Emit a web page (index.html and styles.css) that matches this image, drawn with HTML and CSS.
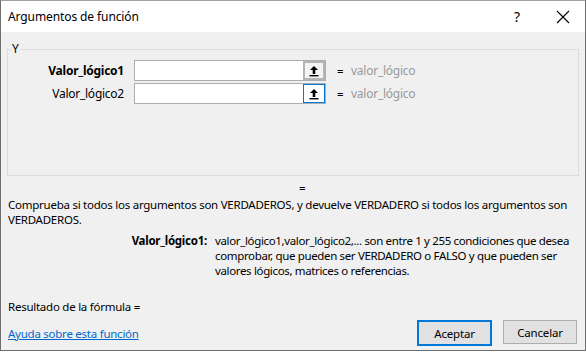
FILE: index.html
```html
<!DOCTYPE html>
<html>
<head>
  <title>Argumentos de función</title>
  <link rel="stylesheet" href="styles.css">
</head>
<body>
  <div class="dialog">
    <div class="titlebar">
      <span class="title">Argumentos de función</span>
      <span class="help">?</span>
      <span class="close">
        <svg width="14" height="14" viewBox="0 0 14 14"><path d="M1 1 L13 13 M13 1 L1 13" stroke="#000" stroke-width="1.1" fill="none"/></svg>
      </span>
    </div>

    <div class="content">
      <fieldset class="group">
        <legend>Y</legend>
        <div class="arg-row">
          <label class="arg-label bold">Valor_lógico1</label>
          <div class="arg-input">
            <span class="arg-field"></span>
            <button class="ref-btn">
              <svg width="10" height="12" viewBox="0 0 10 12"><path d="M5 1 L9 5 L6.3 5 L6.3 9 L3.7 9 L3.7 5 L1 5 Z" fill="#000"/><rect x="0.5" y="10" width="9" height="1.4" fill="#000"/></svg>
            </button>
          </div>
          <span class="eq">=</span>
          <span class="arg-value">valor_lógico</span>
        </div>
        <div class="arg-row">
          <label class="arg-label">Valor_lógico2</label>
          <div class="arg-input">
            <span class="arg-field"></span>
            <button class="ref-btn focus">
              <svg width="10" height="12" viewBox="0 0 10 12"><path d="M5 1 L9 5 L6.3 5 L6.3 9 L3.7 9 L3.7 5 L1 5 Z" fill="#000"/><rect x="0.5" y="10" width="9" height="1.4" fill="#000"/></svg>
            </button>
          </div>
          <span class="eq">=</span>
          <span class="arg-value">valor_lógico</span>
        </div>
      </fieldset>

      <div class="result-eq">=</div>
      <p class="desc">Comprueba si todos los argumentos son VERDADEROS, y devuelve VERDADERO si todos los argumentos son VERDADEROS.</p>

      <div class="arg-help">
        <span class="help-label">Valor_lógico1:</span>
        <span class="help-text">valor_lógico1,valor_lógico2,... son entre 1 y 255 condiciones que desea comprobar, que pueden ser VERDADERO o FALSO y que pueden ser valores lógicos, matrices o referencias.</span>
      </div>

      <div class="formula">Resultado de la fórmula =</div>

      <div class="footer">
        <a href="#" class="help-link">Ayuda sobre esta función</a>
        <div class="buttons">
          <button class="btn default">Aceptar</button>
          <button class="btn">Cancelar</button>
        </div>
      </div>
    </div>
  </div>
</body>
</html>
```

FILE: styles.css
```css
body {
  margin: 0;
  padding: 0;
  background-color: #fff;
  font-family: "Noto Sans", "Open Sans", sans-serif;
  font-size: 11.5px;
  line-height: 15px;
  letter-spacing: -0.25px;
  color: #000;
}
.dialog {
  width: 584px;
  height: 349px;
  border: 1px solid #6e6e6e;
  border-top-color: #a0a0a0;
  display: flex;
  flex-direction: column;
  background-color: #f0f0f0;
  overflow: hidden;
}
.titlebar {
  height: 31px;
  flex-shrink: 0;
  background-color: #fff;
  display: flex;
  align-items: center;
  padding-left: 7px;
}
.title {
  font-size: 12px;
  letter-spacing: -0.1px;
  flex: 1;
}
.help {
  font-size: 14px;
  width: 14px;
  margin-right: 28px;
}
.close {
  display: flex;
  margin-right: 15px;
}
.content {
  flex: 1;
  padding: 12px 6px 0 6px;
  display: flex;
  flex-direction: column;
}
.group {
  margin: 0;
  padding: 6px 0 0 0;
  height: 132px;
  flex-shrink: 0;
  border: 1px solid #dcdcdc;
  box-sizing: border-box;
}
.group legend {
  padding: 0 1px;
  margin-left: 3px;
  line-height: 10px;
  font-size: 12px;
}
.arg-row {
  display: flex;
  align-items: center;
  height: 21px;
  margin-bottom: 2px;
}
.arg-label {
  width: 116px;
  text-align: right;
  margin-right: 10px;
  font-size: 12px;
}
.bold {
  font-weight: bold;
}
.arg-input {
  width: 192px;
  height: 21px;
  box-sizing: border-box;
  border: 1px solid #adadad;
  background-color: #fff;
  display: flex;
}
.arg-field {
  flex: 1;
}
.ref-btn {
  width: 22px;
  height: 19px;
  margin: 0;
  padding: 0;
  border: 2px solid #b4b4b4;
  background-color: #f4f4f4;
  display: flex;
  align-items: center;
  justify-content: center;
}
.ref-btn.focus {
  border: 1px solid #0078d7;
  background-color: #fff;
}
.eq {
  margin-left: 11px;
  width: 14px;
}
.arg-value {
  color: #999;
  font-size: 12px;
}
.result-eq {
  margin-top: 5px;
  line-height: 14px;
  padding-left: 292px;
}
.desc {
  margin: 2px 0 0 1px;
}
.arg-help {
  display: flex;
  margin-top: 6px;
}
.help-label {
  width: 200px;
  text-align: right;
  font-weight: bold;
  margin-right: 8px;
}
.help-text {
  flex: 1;
  letter-spacing: -0.35px;
}
.formula {
  margin: 21px 0 0 1px;
}
.footer {
  display: flex;
  align-items: center;
  justify-content: space-between;
  margin-top: 6px;
}
.help-link {
  color: #0066cc;
  margin-left: 1px;
}
.buttons {
  display: flex;
  gap: 11px;
  margin-right: 2px;
}
.btn {
  width: 74px;
  height: 24px;
  font-family: "Noto Sans", "Open Sans", sans-serif;
  font-size: 11.5px;
  letter-spacing: -0.2px;
  background-color: #e1e1e1;
  border: 1px solid #adadad;
  padding: 0;
}
.btn.default {
  width: 75px;
  height: 26px;
  border: 2px solid #0078d7;
}
```
